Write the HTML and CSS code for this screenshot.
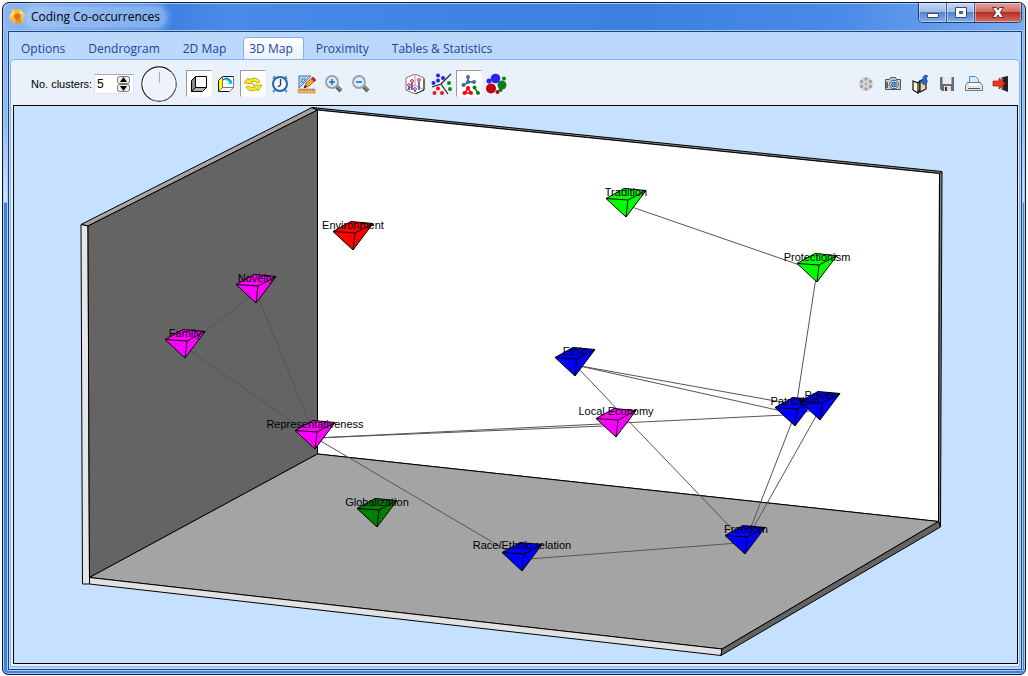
FILE: index.html
```html
<!DOCTYPE html>
<html lang="en">
<head>
<meta charset="utf-8">
<title>Coding Co-occurrences</title>
<link rel="stylesheet" href="styles.css">
</head>
<body>
<div class="window">
  <header class="titlebar">
    <svg class="app-icon" width="17" height="17" viewBox="0 0 17 17"><path d="M4 1h7l5 6-3 8-7 1-6-6z" fill="#f8bd35"/><path d="M4 1l2 5-6 4zM11 1l-1 5 6 1z" fill="#fdd978"/><path d="M6 16l1-5 5 0 1 4z" fill="#e79614"/><path d="M6 6l4-1 2 3-1 3-4 1-2-3z" fill="#d9731a"/></svg>
    <h1 class="title">Coding Co-occurrences</h1>
    <div class="caption">
      <button class="cap" aria-label="Minimize"><svg width="14" height="12" viewBox="0 0 14 12"><path d="M1.500 6.500h11v4h-11z" fill="#fff" stroke="#454b5e"/></svg></button>
      <button class="cap" aria-label="Maximize"><svg width="14" height="12" viewBox="0 0 14 12"><path d="M1.500.500h11v10h-11zM5.500 4.500v2h3v-2z" fill="#fff" fill-rule="evenodd" stroke="#454b5e"/></svg></button>
      <button class="cap close" aria-label="Close"><svg width="14" height="12" viewBox="0 0 14 12"><path d="M1.500.500h4L7 3 8.500.500h4L9.300 5.500l3.200 5h-4L7 8l-1.500 2.500h-4l3.200-5z" fill="#fff" stroke="#5b3037"/></svg></button>
    </div>
  </header>
  <main class="client">
    <nav class="tabs">
      <a class="tab" href="#options">Options</a>
      <a class="tab" href="#dendrogram">Dendrogram</a>
      <a class="tab" href="#map2d">2D Map</a>
      <a class="tab active" href="#map3d">3D Map</a>
      <a class="tab" href="#proximity">Proximity</a>
      <a class="tab" href="#tables">Tables &amp; Statistics</a>
    </nav>
    <section class="page">
      <div class="toolbar">
        <label class="label" for="clusters">No. clusters:</label>
        <div class="spin">
          <input id="clusters" type="text" value="5">
          <div class="arrows">
            <button aria-label="More clusters"><svg width="13" height="8" viewBox="0 0 13 8"><rect x=".500" y=".500" width="12" height="7" rx="2" fill="#eee" stroke="#777"/><path d="M6.500 1L10 6H3z"/></svg></button>
            <button aria-label="Fewer clusters"><svg width="13" height="8" viewBox="0 0 13 8"><rect x=".500" y=".500" width="12" height="7" rx="2" fill="#eee" stroke="#777"/><path d="M6.500 7L10 2H3z"/></svg></button>
          </div>
        </div>
        <svg class="dial" width="38" height="38" viewBox="0 0 38 38"><circle cx="19" cy="19" r="17" fill="#edf2fb" stroke="#111" stroke-width="1.300"/><circle cx="19" cy="19" r="15.800" fill="none" stroke="#fff" stroke-width="1.500"/><path d="M31 7a17 17 0 0 1-20 27" fill="none" stroke="#aaa"/><path d="M19.500 7v11" stroke="#8fb4dc"/></svg>
        <div class="group">
          <button class="tool pressed" aria-label="Walls"><svg width="20" height="20" viewBox="0 0 20 20"><path d="M2.500 6.500l4-4v11l-4 4z" fill="#888"/><path d="M2.500 17.500l4-4h11l-4 4z" fill="#b0b0b0"/><path d="M6.500 2.500h11v11h-11z" fill="#fff"/><path d="M2.500 6.500l4-4h11v11l-4 4h-11zM6.500 2.500v11h11M6.500 13.500l-4 4" fill="none" stroke="#000"/></svg></button>
          <button class="tool" aria-label="Wall colors"><svg width="20" height="20" viewBox="0 0 20 20"><path d="M2.500 6.500l4-4v11l-4 4z" fill="#ffff00"/><path d="M6.500 2.500h11v11h-11z" fill="#fff"/><path d="M2.500 17.500l4-4h11l-4 4z" fill="#fff"/><path d="M2.500 6.500l4-4h11M2.500 6.500v11h11" fill="none" stroke="#111"/><path d="M17.500 2.500v11l-4 4M6.500 2.500v11h11M6.500 13.500l-4 4" fill="none" stroke="#777"/><path d="M7 6l3-2 3 1 1 2 2-1v4h-4l1-2-3-2z" fill="#0df"/><path d="M7 6l3-2 3 1 2 3" fill="none" stroke="#0056b8"/></svg></button>
          <button class="tool pressed" aria-label="Rotate"><svg width="20" height="20" viewBox="0 0 20 20"><path d="M1 9l4-5 1 2c4-3 9-2 11 2l-3 1c-2-2-4-2-6-1l2 2zM19 11l-4 6-1-2c-4 3-9 2-11-2l3-1c2 2 4 2 6 1l-2-2z" fill="#ffec16" stroke="#a89a0a" stroke-width=".800"/></svg></button>
          <button class="tool" aria-label="Timer"><svg width="20" height="20" viewBox="0 0 20 20"><path d="M3 5l2-3M17 5l-2-3M5 16l-2 2M15 16l2 2" stroke="#5b8fc4" stroke-width="2"/><circle cx="10" cy="10" r="7" fill="#f4faff" stroke="#2864a8" stroke-width="2"/><path d="M10.500 5v6L8 13" fill="none" stroke="#173d70" stroke-width="1.300"/></svg></button>
          <button class="tool" aria-label="Design"><svg width="20" height="20" viewBox="0 0 20 20"><path d="M2 2v12L14 2zM5 5v4l4-4z" fill="#b7d4ee" fill-rule="evenodd" stroke="#3f73a9"/><path d="M1 15h17v4H1z" fill="#f0b66c" stroke="#c08a4a" stroke-width=".700"/><path d="M4 15v2M7 15v2M10 15v2M13 15v2M16 15v2" stroke="#754519" stroke-width=".700"/><path d="M7 14l2-5 7-6 3 3-7 6z" fill="#f2a736" stroke="#784213" stroke-width=".700"/><path d="M16 3l3 3-2 2-3-3z" fill="#c7262a"/><path d="M7 14l1-3 2 2z" fill="#222"/></svg></button>
          <button class="tool" aria-label="Zoom in"><svg width="20" height="20" viewBox="0 0 20 20"><path d="M12 12l5 5" stroke="#666" stroke-width="4"/><path d="M13 12l4 4" stroke="#aaa"/><circle cx="8" cy="8" r="6" fill="#dcecff" stroke="#999fa8" stroke-width="1.800"/><path d="M5 8h6M8 5v6" stroke="#2264be" stroke-width="1.500"/></svg></button>
          <button class="tool" aria-label="Zoom out"><svg width="20" height="20" viewBox="0 0 20 20"><path d="M12 12l5 5" stroke="#666" stroke-width="4"/><path d="M13 12l4 4" stroke="#aaa"/><circle cx="8" cy="8" r="6" fill="#dcecff" stroke="#999fa8" stroke-width="1.800"/><path d="M5 8h6" stroke="#2264be" stroke-width="1.500"/></svg></button>
        </div>
        <div class="group second">
          <button class="tool" aria-label="Drop lines"><svg width="20" height="20" viewBox="0 0 20 20"><path d="M1 4l9-4 9 4v12l-9 4-9-4z" fill="#fff" stroke="#777"/><path d="M1 16l9-5 9 5M10 1v10" fill="none" stroke="#999"/><path d="M10 20l9-4V5" fill="none" stroke="#222"/><path d="M4 12v4M7 8v8M10 15v3M14 7v9" stroke="#1721c8" stroke-width="1.300"/><g fill="#fff" stroke="#d41838"><circle cx="4" cy="11" r="1.400"/><circle cx="7" cy="7" r="1.400"/><circle cx="10" cy="15" r="1.400"/><circle cx="14" cy="6" r="1.400"/></g></svg></button>
          <button class="tool" aria-label="Partition"><svg width="22" height="22" viewBox="0 0 22 22"><path d="M1 14l9-3 10-10M10 11l7 10" fill="none" stroke="#222" stroke-width="1.200"/><g fill="#2222f4"><circle cx="7" cy="2.500" r="2"/><circle cx="12" cy="5" r="2"/><circle cx="7" cy="7.500" r="2"/><circle cx="2.500" cy="10" r="2"/></g><g fill="#f41118"><circle cx="7" cy="15.500" r="2"/><circle cx="3.500" cy="20" r="2"/><circle cx="11" cy="20" r="2"/></g><g fill="#068a12"><circle cx="18" cy="10" r="2"/><circle cx="19" cy="16" r="2"/></g></svg></button>
          <button class="tool pressed" aria-label="Links"><svg width="22" height="22" viewBox="0 0 22 22"><path d="M10 4v5l-4 3M10 9h6" fill="none" stroke="#284f7a" stroke-width="1.500"/><path d="M10 15l-3 5h6z" fill="none" stroke="#f00" stroke-width="1.500"/><path d="M16 14l4 6" stroke="#078018" stroke-width="1.500"/><g fill="#426d99"><circle cx="10" cy="4" r="2"/><circle cx="5.500" cy="12" r="2"/><circle cx="10" cy="9" r="2"/><circle cx="16" cy="9" r="2"/></g><g fill="#f00"><circle cx="10" cy="15" r="2"/><circle cx="6.500" cy="20" r="2"/><circle cx="13" cy="20" r="2"/></g><g fill="#078018"><circle cx="16.500" cy="14.500" r="2"/><circle cx="20" cy="20" r="2"/></g></svg></button>
          <button class="tool" aria-label="Bubbles"><svg width="22" height="22" viewBox="0 0 22 22"><g fill="#2724ed"><circle cx="10.500" cy="5.500" r="4.800"/><circle cx="4" cy="8" r="2.500"/></g><g fill="#078018"><circle cx="17" cy="12" r="4.500"/><circle cx="19" cy="5.500" r="2"/><circle cx="15.500" cy="17" r="2"/></g><g fill="#bd0009"><circle cx="6" cy="15.500" r="5"/><circle cx="12.500" cy="19" r="2"/></g></svg></button>
        </div>
        <div class="group last">
          <button class="tool" aria-label="Record" disabled><svg width="18" height="18" viewBox="0 0 18 18"><circle cx="9" cy="9" r="7" fill="#d4d4d4"/><g fill="#999"><circle cx="9" cy="4" r="1.500"/><circle cx="9" cy="14" r="1.500"/><circle cx="4.500" cy="6.500" r="1.500"/><circle cx="13.500" cy="6.500" r="1.500"/><circle cx="4.500" cy="11.500" r="1.500"/><circle cx="13.500" cy="11.500" r="1.500"/><circle cx="9" cy="9" r="1"/></g></svg></button>
          <button class="tool" aria-label="Snapshot"><svg width="18" height="18" viewBox="0 0 18 18"><path d="M1.500 4.500h4l1-2h5l1 2h4v10h-15z" fill="#c9ced2" stroke="#4d5358"/><path d="M2 7h2v6H2z" fill="#666"/><circle cx="10" cy="9.500" r="4.300" fill="#eef6fd" stroke="#444"/><circle cx="10" cy="9.500" r="2.500" fill="#4f9de4" stroke="#1f5f9f"/></svg></button>
          <button class="tool" aria-label="Append"><svg width="18" height="20" viewBox="0 0 18 20"><path d="M2 7l5 2v10l-5-3zM7 9l2-2v9l-2 3z" fill="#fff8d8" stroke="#111" stroke-width="1.200"/><path d="M9 7l6-3v11l-6 3z" fill="#ead99c" stroke="#111" stroke-width="1.200"/><path d="M14 1l-2 2v4h-3l4 4 4-4h-2V4l2-2z" fill="#2271d2" stroke="#124b96" stroke-width=".700"/></svg></button>
          <button class="tool" aria-label="Save"><svg width="18" height="18" viewBox="0 0 18 18"><path d="M2 2h14v14H4l-2-2z" fill="#6a6c72"/><path d="M4.500 2h9v7h-9z" fill="#e8eaee"/><path d="M6 11h7v5H6z" fill="#ddd"/><path d="M7 12h2v4H7z" fill="#333"/></svg></button>
          <button class="tool" aria-label="Print"><svg width="18" height="18" viewBox="0 0 18 18"><path d="M4.500 8V1.500h6l3 3V8" fill="#d4e8ff" stroke="#4d8dd2"/><path d="M2.500 7.500h13l2 3v5H.500v-5z" fill="#e5e5e8" stroke="#737780"/><path d="M3 13.500h12" stroke="#555"/><path d="M4 8.500h10v2H4z" fill="#fff"/></svg></button>
          <button class="tool" aria-label="Exit"><svg width="18" height="18" viewBox="0 0 18 18"><path d="M9 2h7v13H9z" fill="#777"/><path d="M11 2l5-1v16l-5-2z" fill="#222"/><path d="M1 6h6V3l6 5.500L7 14v-3H1z" fill="#ee3422" stroke="#a9170e" stroke-width=".700"/></svg></button>
        </div>
      </div>
      <div class="chart">
        <svg class="scene" viewBox="14 106 1003 557" role="img" aria-label="3D concept map">
          <defs>
            <g id="gem">
              <path class="edge" d="M0 0L-20-18.500L-2-28.500L20-26.500Z"/>
              <path class="edge" d="M-20-18.500L2-17L20-26.500M2-17L0 0"/>
            </g>
          </defs>
          <g class="edge">
            <path fill="#a4a4a4" d="M81 224.500L312 107.500L317.500 110L88 226Z"/>
            <path fill="#e6e6e6" d="M81 224.500L88 226L89.500 584H82.500Z"/>
            <path fill="#646464" d="M88 226L317.500 110V454L89.500 577.500Z"/>
            <path fill="#808080" d="M312 107.500L942 171.500L939.500 173.500L317.500 110Z"/>
            <path fill="#fff" d="M317.500 110L939.500 173.500L938.500 521.500L317.500 454Z"/>
            <path fill="#808080" d="M939.500 173.500L942 171.500L940.500 527L938.500 521.500Z"/>
            <path fill="#a4a4a4" d="M89.500 577.500L317.500 454L938.500 521.500L722 649Z"/>
            <path fill="#e2e2e2" d="M89.500 577.500L722 649L721 655.500L89.500 584Z"/>
            <path fill="#646464" d="M722 649L938.500 521.500L940.500 527L721 655.500Z"/>
          </g>
          <path class="links" d="M626 205L817 271L795 414M575 365L795 414L820 409L575 365L745 542.500L795 414M745 542.500L820 409M315.500 438L795 414.500M315.500 438L616 425.500M315.500 438L522 559.500L745 542.500M256 292L185 347L315.500 438L256 292"/>
          <g fill="#f0f"><use href="#gem" x="256" y="303"/><use href="#gem" x="185" y="358"/><use href="#gem" x="315" y="449"/><use href="#gem" x="616" y="437"/></g>
          <g fill="#00f"><use href="#gem" x="575" y="376"/><use href="#gem" x="795" y="426"/><use href="#gem" x="820" y="420"/><use href="#gem" x="745" y="554"/><use href="#gem" x="522" y="571"/></g>
          <g fill="#0f0"><use href="#gem" x="626" y="217"/><use href="#gem" x="817" y="282"/></g>
          <use href="#gem" x="353" y="250" fill="#f00"/>
          <use href="#gem" x="377" y="527" fill="#008000"/>
          <g class="names">
            <text x="353" y="229">Environment</text>
            <text x="256" y="282">Novelty</text>
            <text x="185" y="337">Family</text>
            <text x="315" y="428">Representativeness</text>
            <text x="377" y="506">Globalization</text>
            <text x="522" y="549">Race/Ethnic relation</text>
            <text x="575" y="355">Ethic</text>
            <text x="616" y="415">Local Economy</text>
            <text x="795" y="405">Patriotism</text>
            <text x="820" y="399">Power</text>
            <text x="746" y="533">Freedom</text>
            <text x="817" y="261">Protectionism</text>
            <text x="626" y="196">Tradition</text>
          </g>
        </svg>
      </div>
    </section>
  </main>
</div>
</body>
</html>
```
FILE: styles.css
```css
* { box-sizing: border-box; }
body {
  margin: 0;
  padding: 2px;
  min-height: 100vh;
  display: flex;
  background: #fff;
  font-family: "Liberation Sans", Arial, sans-serif;
  font-size: 11px;
  color: #000;
}
button { border: 0; padding: 0; background: none; font: inherit; }
svg { display: block; }
.window {
  flex: 1;
  display: flex;
  flex-direction: column;
  padding: 0 3px 4px 5px;
  border: 1px solid #0c1830;
  border-radius: 7px 7px 6px 6px;
  background:
    linear-gradient(to right, #8fb8f4, #6fa3ee 5%, #3e80e0 16%, #4a8be8 22%, #4184e4 40%, #3c80e0 62%, #4a8ae8 82%, #7aacf0) top / 100% 28px no-repeat,
    linear-gradient(#82b1f2 28px, #8ebaf4 120px, #d5e6fb 199px, #3d82e2 200px, #3d82e2);
  box-shadow: inset 0 0 0 1px #a8ccf8;
}
.titlebar {
  display: flex;
  align-items: flex-start;
  height: 28px;
  padding-left: 1px;
}
.app-icon { margin-top: 5px; }
.title {
  margin: 4px 0 0;
  padding: 0 5px;
  font: 12px/20px "Open Sans", sans-serif;
  border-radius: 8px;
  background: rgba(190, 215, 250, .5);
  box-shadow: 0 0 6px 3px rgba(190, 215, 250, .5);
}
.caption {
  display: flex;
  margin-left: auto;
  border: 1px solid #24406e;
  border-top: 0;
  border-radius: 0 0 5px 5px;
  overflow: hidden;
}
.cap {
  display: grid;
  place-items: center;
  width: 28px;
  height: 19px;
  border-right: 1px solid #3b5d90;
  background: linear-gradient(#c3d9f6, #9cbcea 48%, #5485cc 50%, #84b0ea);
  box-shadow: inset 0 0 0 1px rgba(255, 255, 255, .4);
}
.cap.close {
  width: 46px;
  border-right: 0;
  background: linear-gradient(#e3a39c, #d0685e 48%, #b52d20 50%, #d4705e);
}
.client {
  flex: 1;
  display: flex;
  flex-direction: column;
  border: 1px solid #1d427c;
  background: #bcd8fb;
  box-shadow: 0 0 0 1px #a8ccf8;
}
.tabs {
  display: flex;
  gap: 6px;
  padding: 5px 0 0 6px;
}
.tab {
  height: 22px;
  padding: 0 10px 0 5px;
  border: 1px solid transparent;
  border-bottom: 0;
  border-radius: 3px 3px 0 0;
  font: 12px/22px "Open Sans", sans-serif;
  color: #1f449c;
  text-decoration: none;
  white-space: nowrap;
}
.tab.active {
  height: 23px;
  margin-bottom: -1px;
  border-color: #83b2f0;
  background: linear-gradient(#fff, #e9f1fb);
}
.page {
  flex: 1;
  display: flex;
  flex-direction: column;
  margin: 0 1px 2px;
  padding: 0 1px 2px 2px;
  border: 1px solid #83b2f0;
  border-radius: 4px 4px 0 0;
  background: #e9f1fb;
}
.toolbar {
  display: flex;
  align-items: center;
  height: 45px;
  padding: 2px 4px 0 18px;
}
.label { width: 63px; white-space: nowrap; }
.spin {
  display: flex;
  align-items: center;
  width: 40px;
  height: 20px;
  background: #fff;
  border: 1px solid #dde3ec;
  border-top-color: #aaa;
}
.spin input {
  width: 22px;
  border: 0;
  padding: 0 0 0 2px;
  outline: 0;
  background: none;
  font: 12px/16px "Liberation Sans", Arial, sans-serif;
}
.arrows { display: grid; }
.dial { margin: 0 8px 0 6px; }
.group { display: flex; gap: 1px; }
.second { margin-left: 28px; }
.last { margin-left: auto; }
.tool {
  display: grid;
  place-items: center;
  width: 26px;
  height: 27px;
}
.tool.pressed {
  background: #fff;
  border: 1px solid #f6f8fb;
  border-top-color: #999;
  border-left-color: #999;
}
.chart {
  flex: 1;
  display: grid;
  border: 1px solid #000;
  background: #c6e1ff;
}
.scene { width: 100%; height: 100%; }
.edge { stroke: #000; stroke-width: 1; stroke-linejoin: round; }
#gem path + path { fill: none; }
.links { fill: none; stroke: #555; }
.names { font-size: 11px; text-anchor: middle; }
```
